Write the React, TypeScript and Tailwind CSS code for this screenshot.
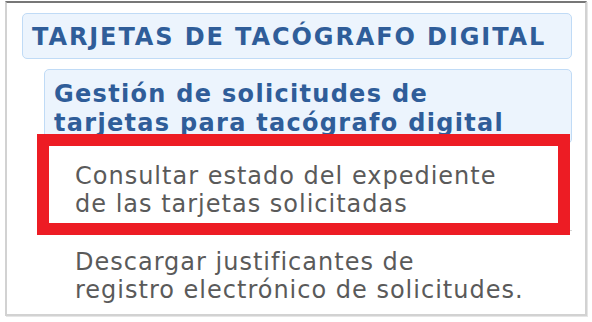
import React from "react";

const items = [
  ["Consultar estado del expediente", "de las tarjetas solicitadas"],
  ["Descargar justificantes de", "registro electrónico de solicitudes."],
];

export default function App() {
  return (
    <div className="relative h-[322px] w-[592px] bg-white font-['DejaVu_Sans',Verdana,sans-serif]">
      {/* Menu panel */}
      <div className="ml-[5px] pt-px">
        <div className="h-[315px] w-[582px] border-2 border-[#d2d2d2] border-t-[#777] bg-white pl-[15px] pr-[13px] pt-[10px] shadow-[1px_1px_0_#e6e6e6]">
          <div className="rounded-[5px] border border-[#c0dbf6] bg-[#ecf4fd] px-[9px] pt-[9px] pb-[6px] text-[24px] leading-[29px] font-bold tracking-[1.9px] text-[#2f5d99]">
            TARJETAS DE TACÓGRAFO DIGITAL
          </div>

          <div className="ml-[22px] mt-[10px]">
            <div className="rounded-[5px] border border-[#c0dbf6] bg-[#ecf4fd] px-[9px] pt-[10px] pb-[5px] text-[24px] leading-[29px] font-bold tracking-[1.3px] text-[#2f5d99]">
              Gestión de solicitudes de
              <br />
              tarjetas para tacógrafo digital
            </div>

            <ul>
              {items.map((lines, i) => (
                <li
                  key={i}
                  className={
                    i === 0
                      ? "border-b border-[#d6d6d6] pl-[31px] pt-[18px] pb-[12px] text-[24px] leading-[28px] tracking-[1px] text-[#5a5a5a]"
                      : "pl-[31px] pt-[17px] text-[24px] leading-[28px] tracking-[1px] text-[#5a5a5a]"
                  }
                >
                  {lines[0]}
                  <br />
                  {lines[1]}
                </li>
              ))}
            </ul>
          </div>
        </div>
      </div>

      {/* Red highlight annotation */}
      <div className="absolute left-[37px] top-[134px] h-[101px] w-[533px] border-[12px] border-[#ed1c24]" />
    </div>
  );
}
